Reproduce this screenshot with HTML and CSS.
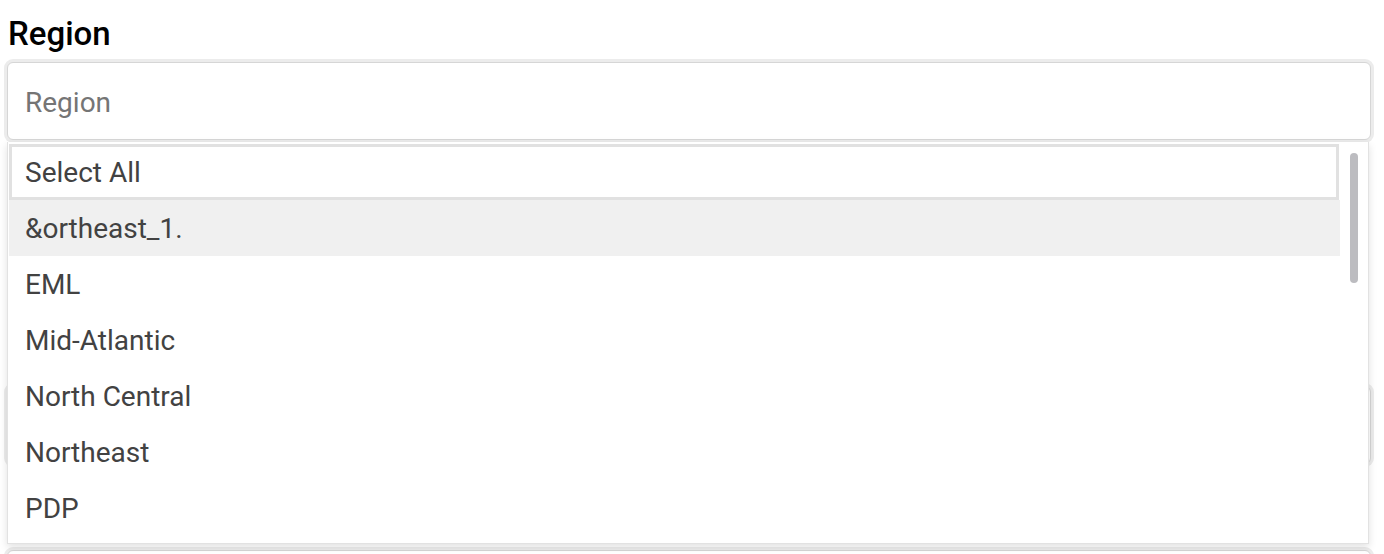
FILE: index.html
```html
<!DOCTYPE html>
<html>
<head>
<meta charset="utf-8">
<link rel="stylesheet" href="styles.css">
</head>
<body>
<div class="form">
  <div class="field first">
    <div class="label">Region</div>
    <div class="input"><span class="placeholder">Region</span></div>
    <div class="dropdown">
      <ul class="list">
        <li class="item focused">Select All</li>
        <li class="item hover">&amp;ortheast_1.</li>
        <li class="item">EML</li>
        <li class="item">Mid-Atlantic</li>
        <li class="item">North Central</li>
        <li class="item">Northeast</li>
        <li class="item">PDP</li>
      </ul>
      <div class="track"><div class="thumb"></div></div>
    </div>
  </div>
  <div class="field under">
    <div class="label-space"></div>
    <div class="input"></div>
  </div>
  <div class="field under">
    <div class="label-space"></div>
    <div class="input"></div>
  </div>
</div>
</body>
</html>
```
FILE: styles.css
```css
html, body {
  margin: 0;
  padding: 0;
  background: #fff;
  overflow: hidden;
}
body {
  font-family: Roboto, "Liberation Sans", sans-serif;
  width: 1384px;
  height: 554px;
}
.form {
  display: flex;
  flex-direction: column;
  padding: 18px 13px 0 7px;
}
.field {
  position: relative;
  display: flex;
  flex-direction: column;
}
.field.under {
  margin-top: 42px;
}
.field.first {
  margin-bottom: 160px;
}
.label {
  font-size: 33px;
  line-height: 32px;
  font-weight: 500;
  color: #000;
  padding-left: 1px;
  margin-bottom: 12px;
}
.label-space {
  height: 32px;
  margin-bottom: 12px;
}
.input {
  height: 76px;
  border: 1px solid #d6d6d6;
  border-radius: 6px;
  box-shadow: 0 0 0 3px #ececec;
  display: flex;
  align-items: center;
  padding-left: 17px;
  background: #fff;
}
.placeholder {
  font-size: 28px;
  color: #757575;
  padding-top: 2px;
}
.dropdown {
  position: absolute;
  top: 124px;
  left: 0;
  width: 1362px;
  height: 402px;
  box-sizing: border-box;
  background: #fff;
  border: 1px solid #e2e2e2;
  border-top: none;
  box-shadow: 0 3px 8px rgba(0, 0, 0, 0.12);
  display: flex;
  overflow: hidden;
  z-index: 10;
}
.list {
  list-style: none;
  margin: 0;
  padding: 2px 0 0 1px;
  flex: 1;
  display: flex;
  flex-direction: column;
}
.item {
  height: 56px;
  flex: none;
  display: flex;
  align-items: center;
  padding-left: 16px;
  padding-top: 1px;
  font-size: 28px;
  color: #424242;
  box-sizing: border-box;
}
.item.focused {
  box-shadow: inset 0 0 0 3px #e1e1e1;
  margin-right: 1px;
}
.item.hover {
  background: #f0f0f0;
}
.track {
  width: 28px;
  flex: none;
  display: flex;
  justify-content: center;
  padding-top: 11px;
}
.thumb {
  width: 8px;
  height: 130px;
  border-radius: 4px;
  background: #bcbcc0;
}
```
